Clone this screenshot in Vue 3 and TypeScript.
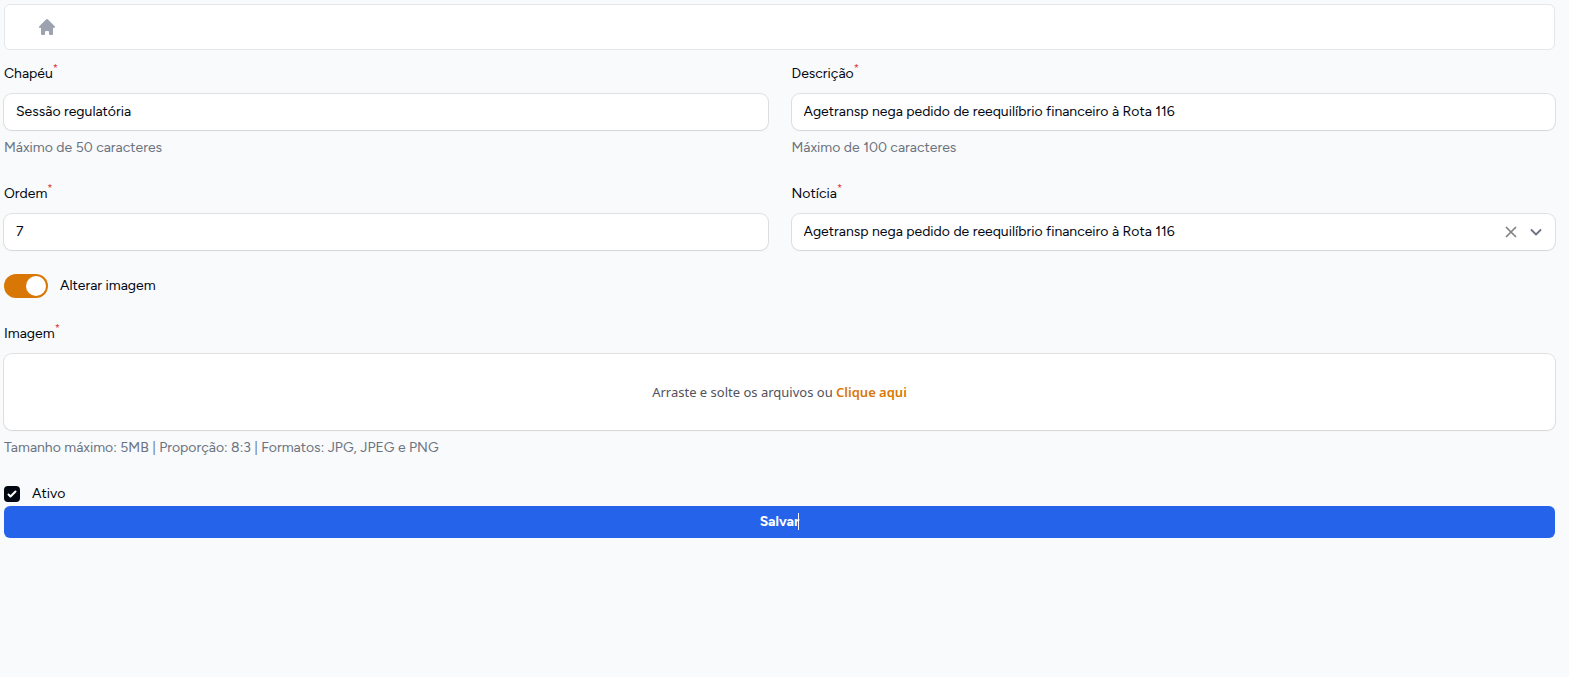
<script setup lang="ts">
import { ref } from 'vue'

const headline = 'Agetransp nega pedido de reequilíbrio financeiro à Rota 116'

const chapeu = ref('Sessão regulatória')
const descricao = ref(headline)
const ordem = ref('7')
const noticia = ref(headline)
const alterarImagem = ref(true)
const ativo = ref(true)
</script>

<template>
  <main class="page">
    <nav class="breadcrumb" aria-label="Breadcrumb">
      <a href="#" class="home" aria-label="Início">
        <svg viewBox="0 0 20 20" width="20" height="20" fill="currentColor" aria-hidden="true">
          <path d="M10.707 2.293a1 1 0 00-1.414 0l-7 7a1 1 0 001.414 1.414L4 10.414V17a1 1 0 001 1h2a1 1 0 001-1v-2a1 1 0 011-1h2a1 1 0 011 1v2a1 1 0 001 1h2a1 1 0 001-1v-6.586l.293.293a1 1 0 001.414-1.414l-7-7z" />
        </svg>
      </a>
    </nav>

    <form @submit.prevent>
      <div class="fields">
        <div class="field">
          <label class="label" for="chapeu">Chapéu<sup>*</sup></label>
          <div class="control"><input id="chapeu" v-model="chapeu" type="text" maxlength="50" /></div>
          <p class="hint">Máximo de 50 caracteres</p>
        </div>

        <div class="field">
          <label class="label" for="descricao">Descrição<sup>*</sup></label>
          <div class="control"><input id="descricao" v-model="descricao" type="text" maxlength="100" /></div>
          <p class="hint">Máximo de 100 caracteres</p>
        </div>

        <div class="field">
          <label class="label" for="ordem">Ordem<sup>*</sup></label>
          <div class="control"><input id="ordem" v-model="ordem" type="text" inputmode="numeric" /></div>
        </div>

        <div class="field">
          <label class="label" for="noticia">Notícia<sup>*</sup></label>
          <div class="control">
            <select id="noticia" v-model="noticia">
              <option :value="headline">{{ headline }}</option>
            </select>
            <button type="button" class="clear" aria-label="Limpar" @click="noticia = ''">
              <svg viewBox="0 0 12 12" width="12" height="12" fill="none" stroke="currentColor" stroke-width="1.6" aria-hidden="true">
                <path d="M1 1l10 10M11 1L1 11" />
              </svg>
            </button>
            <svg class="chevron" viewBox="0 0 20 20" width="20" height="20" fill="none" stroke="currentColor" stroke-width="1.8" stroke-linecap="round" stroke-linejoin="round" aria-hidden="true">
              <path d="M5.5 8l4.5 4.5L14.500 8" />
            </svg>
          </div>
        </div>

        <label class="check wide">
          <input v-model="alterarImagem" class="switch" type="checkbox" role="switch" />
          Alterar imagem
        </label>

        <div class="field wide">
          <label class="label" for="imagem">Imagem<sup>*</sup></label>
          <label class="control drop" for="imagem">
            <input id="imagem" class="file" type="file" accept=".jpg,.jpeg,.png" />
            <span>Arraste e solte os arquivos ou <b>Clique aqui</b></span>
          </label>
          <p class="hint">Tamanho máximo: 5MB | Proporção: 8:3 | Formatos: JPG, JPEG e PNG</p>
        </div>

        <label class="check wide">
          <input v-model="ativo" class="tick" type="checkbox" />
          Ativo
        </label>
      </div>

      <button type="submit" class="save">
        <span class="save-text">Salvar<i class="caret" aria-hidden="true"></i></span>
      </button>
    </form>
  </main>
</template>

<style>
body {
  background: #f9fafb;
}
</style>

<style scoped>
.page {
  padding: 4px 14px 4px 4px;
  color: #030712;
  font-family: Figtree, Lato, sans-serif;
  font-size: 14px;
  line-height: 24px;
}

.page *,
.page *::before {
  box-sizing: border-box;
}

.breadcrumb {
  display: flex;
  align-items: center;
  height: 46px;
  margin-bottom: 12px;
  padding: 0 32px;
  background: #fff;
  border: 1px solid #e5e7eb;
  border-radius: 6px;
}

.home {
  display: flex;
  color: #9ca3af;
}

.fields {
  display: grid;
  grid-template-columns: 1fr 1fr;
  gap: 24px;
}

.wide {
  grid-column: 1 / -1;
}

.field {
  display: flex;
  flex-direction: column;
  gap: 8px;
  min-width: 0;
}

.label {
  height: 24px;
}

sup {
  color: #dc2626;
  font-size: 11px;
  font-weight: 300;
  line-height: 0;
}

.control {
  display: flex;
  align-items: center;
  min-height: 36px;
  background: #fff;
  border-radius: 8px;
  box-shadow: 0 0 0 1px rgba(3, 7, 18, 0.1), 0 1px 2px rgba(0, 0, 0, 0.05);
}

.control input[type='text'],
.control select {
  flex: 1;
  min-width: 0;
  height: 36px;
  padding: 0 12px;
  border: 0;
  outline: 0;
  background: transparent;
  color: #030712;
  font: inherit;
  appearance: none;
}

.control input[type='text'] {
  padding-bottom: 1px;
}

.clear {
  display: flex;
  padding: 4px;
  border: 0;
  background: transparent;
  color: #7f7f7f;
  cursor: pointer;
}

.chevron {
  margin: 0 9px 0 5px;
  color: #6b7280;
  pointer-events: none;
}

.hint {
  margin: 0;
  color: #6b7280;
  line-height: 20px;
}

.check {
  display: flex;
  align-items: center;
  gap: 12px;
}

.switch,
.tick {
  margin: 0;
  appearance: none;
}

.switch {
  width: 44px;
  height: 24px;
  padding: 2px;
  border-radius: 12px;
  background: #d1d5db;
}

.switch::before {
  display: block;
  width: 20px;
  height: 20px;
  border-radius: 50%;
  background: #fff;
  content: '';
}

.switch:checked {
  background: #d97706;
}

.switch:checked::before {
  margin-left: auto;
}

.tick {
  width: 16px;
  height: 16px;
  border: 1px solid #d1d5db;
  border-radius: 4px;
  background: #fff;
}

.tick:checked {
  border: 0;
  background: #030712 url("data:image/svg+xml,%3Csvg viewBox='0 0 16 16' fill='white' xmlns='http://www.w3.org/2000/svg'%3E%3Cpath d='M12.207 4.793a1 1 0 010 1.414l-5 5a1 1 0 01-1.414 0l-2-2a1 1 0 011.414-1.414L6.5 9.086l4.293-4.293a1 1 0 011.414 0z'/%3E%3C/svg%3E") center / 16px no-repeat;
}

.drop {
  position: relative;
  justify-content: center;
  min-height: 76px;
  color: #52525b;
  font-family: 'Noto Sans', sans-serif;
  font-size: 13px;
  cursor: pointer;
}

.drop b {
  color: #d97706;
  font-weight: 600;
}

.file {
  position: absolute;
  width: 1px;
  height: 1px;
  opacity: 0;
}

.save {
  display: block;
  width: 100%;
  height: 32px;
  padding: 0;
  border: 0;
  border-radius: 6px;
  background: #2563eb;
  color: #fff;
  font: inherit;
  font-weight: 700;
  cursor: pointer;
}

.save-text {
  position: relative;
}

.caret {
  position: absolute;
  top: 0;
  right: 0;
  width: 1px;
  height: 17px;
  background: #fff;
}
</style>
